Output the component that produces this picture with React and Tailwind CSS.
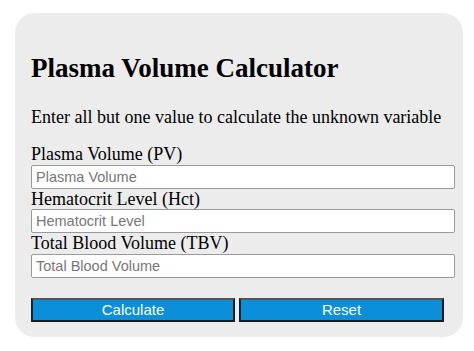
import React, { useState } from 'react';

const serif = "font-['Liberation_Serif','Times_New_Roman',serif]";
const sans = "font-['Liberation_Sans',Arial,sans-serif]";

const fields = [
  { key: 'pv', label: 'Plasma Volume (PV)', placeholder: 'Plasma Volume' },
  { key: 'hct', label: 'Hematocrit Level (Hct)', placeholder: 'Hematocrit Level' },
  { key: 'tbv', label: 'Total Blood Volume (TBV)', placeholder: 'Total Blood Volume' },
];

const App = () => {
  const [values, setValues] = useState({ pv: '', hct: '', tbv: '' });

  const handleChange = (key, value) => {
    setValues({ ...values, [key]: value });
  };

  const handleCalculate = () => {
    const pv = parseFloat(values.pv);
    const hct = parseFloat(values.hct);
    const tbv = parseFloat(values.tbv);
    if (isNaN(pv) && !isNaN(hct) && !isNaN(tbv)) {
      setValues({ ...values, pv: (tbv * (1 - hct / 100)).toFixed(2) });
    } else if (isNaN(tbv) && !isNaN(pv) && !isNaN(hct)) {
      setValues({ ...values, tbv: (pv / (1 - hct / 100)).toFixed(2) });
    } else if (isNaN(hct) && !isNaN(pv) && !isNaN(tbv)) {
      setValues({ ...values, hct: ((1 - pv / tbv) * 100).toFixed(2) });
    }
  };

  const handleReset = () => setValues({ pv: '', hct: '', tbv: '' });

  return (
    <div className="min-h-[351px] bg-white pt-[13px] pl-[15px]">
      <div className={`w-[448px] rounded-[20px] bg-[#ececec] px-4 pt-10 pb-[15px] text-black ${serif}`}>
        <h2 className="text-[27px] font-bold leading-[30px]">Plasma Volume Calculator</h2>
        <p className="mt-6 text-[18px] leading-[20px]">
          Enter all but one value to calculate the unknown variable
        </p>

        <div className="mt-[17px]">
          {fields.map((f) => (
            <div key={f.key}>
              <label className="block text-[18px] leading-[20.5px]">{f.label}</label>
              <input
                type="text"
                value={values[f.key]}
                onChange={(e) => handleChange(f.key, e.target.value)}
                placeholder={f.placeholder}
                className={`block h-6 w-[424px] rounded-[2px] border border-[#9a9a9a] bg-white px-[4px] text-[14.5px] text-black placeholder:text-[#777] outline-none ${sans}`}
              />
            </div>
          ))}
        </div>

        <div className="mt-5 flex gap-1">
          <button
            type="button"
            onClick={handleCalculate}
            className={`h-6 w-[204px] border-2 border-[#1c1c1c] border-t-[#555] bg-[#0a8fd8] text-[15px] leading-none text-white ${sans}`}
          >
            Calculate
          </button>
          <button
            type="button"
            onClick={handleReset}
            className={`h-6 w-[205px] border-2 border-[#1c1c1c] border-t-[#555] bg-[#0a8fd8] text-[15px] leading-none text-white ${sans}`}
          >
            Reset
          </button>
        </div>
      </div>
    </div>
  );
};

export default App;
